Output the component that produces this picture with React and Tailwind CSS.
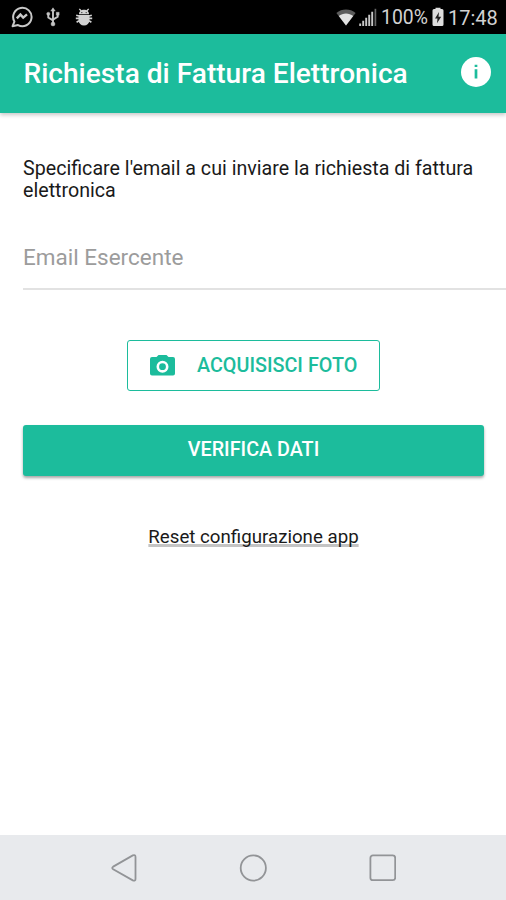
const MessengerIcon = () => (
  <svg width="22" height="22" viewBox="0 0 22 22" fill="none" stroke="#c8c8c8" strokeWidth="2">
    <path d="M3.4 15.6A9.2 9.2 0 1 1 7 19.1L1.6 20.2Z" strokeLinejoin="round" />
    <path d="M5.8 12.4L9.4 8.6L12.2 11.6L16 8.4" strokeWidth="2.4" />
  </svg>
);

const UsbIcon = () => (
  <svg width="14" height="20" viewBox="0 0 14 20" fill="#c4c4c4" stroke="#c4c4c4">
    <path d="M7 3V16M2.3 7V10.5L7 13.4M11.7 7V9.7L7 12.6" fill="none" strokeWidth="1.9" />
    <path d="M7 .8L9.2 4H4.8Z" strokeWidth=".5" />
    <circle cx="7" cy="17" r="2" strokeWidth=".4" />
    <circle cx="2.3" cy="6.8" r="1.6" strokeWidth=".4" />
    <path d="M10.2 5.2H13.2V8.2H10.2Z" strokeWidth=".3" />
  </svg>
);

const BugIcon = () => (
  <svg width="18" height="18" viewBox="0 0 18 18" fill="#d2d2d2">
    <path d="M4 6.2C4 4.8 4.5 3.8 5.3 3L3.8 1.3L4.8.5L6.6 2.2C8.1 1.6 9.9 1.6 11.4 2.2L13.2.5L14.2 1.3L12.7 3C13.5 3.8 14 4.8 14 6.2Z" />
    <path d="M3.5 7H14.5V12.3A5.5 5.2 0 0 1 3.5 12.3Z" />
    <path d="M1.2 7.2L4 8M16.8 7.2L14 8M.8 10.4H17.2M1.6 14.2L4 12.8M16.4 14.2L14 12.8" stroke="#d2d2d2" strokeWidth="1.6" />
    <circle cx="6.8" cy="4.6" r=".7" fill="#333" />
    <circle cx="11.2" cy="4.6" r=".7" fill="#333" />
  </svg>
);

const WifiIcon = () => (
  <svg width="20" height="17" viewBox="0 0 20 17">
    <path d="M10 16.5L.4 4C5.8-.6 14.2-.6 19.6 4Z" fill="#5c5c5c" />
    <path d="M10 16.5L2.8 7C6.8 3.6 13.2 3.6 17.2 7Z" fill="#e2e2e2" />
  </svg>
);

const SignalIcon = () => (
  <svg width="18" height="18" viewBox="0 0 18 18">
    <path d="M1.2 15.6V18M4.2 12.8V18M7.2 9.8V18M10.2 6.8V18M13.2 3.8V18" stroke="#c9c9c9" strokeWidth="1.9" />
    <path d="M16.4 .8V18" stroke="#666" strokeWidth="1.7" />
  </svg>
);

const BatteryIcon = () => (
  <svg width="12" height="20" viewBox="0 0 12 20">
    <path d="M3.5 2V.8H8.5V2H10A1.5 1.5 0 0 1 11.5 3.5V17.5A1.5 1.5 0 0 1 10 19H2A1.5 1.5 0 0 1 .5 17.5V3.5A1.5 1.5 0 0 1 2 2Z" fill="#dedede" />
    <path d="M7 5L3 11.4H5.5L5 16.2L9.2 9.8H6.5Z" fill="#222" />
  </svg>
);

const InfoIcon = () => (
  <svg width="30" height="30" viewBox="0 0 30 30">
    <circle cx="15" cy="15" r="15" fill="#fff" />
    <path d="M15 7.7V10.1M15 12.3V21.6" stroke="#1cbc9c" strokeWidth="2.7" />
  </svg>
);

const CameraIcon = () => (
  <svg width="25" height="21" viewBox="0 0 25 21">
    <path
      d="M8.5 0H16.5L18.5 2H23A2 2 0 0 1 25 4V18.6A2 2 0 0 1 23 20.6H2A2 2 0 0 1 0 18.6V4A2 2 0 0 1 2 2H6.5Z"
      fill="#1cbc9c"
    />
    <circle cx="12.5" cy="11.7" r="4.7" fill="none" stroke="#fff" strokeWidth="2.6" />
  </svg>
);

const StatusBar = () => (
  <div className="flex h-[34px] items-center bg-black pl-[11px] pr-2 text-[#d2d2d2]">
    <MessengerIcon />
    <div className="ml-[13px]"><UsbIcon /></div>
    <div className="ml-[15px]"><BugIcon /></div>
    <div className="ml-auto"><WifiIcon /></div>
    <div className="ml-[3px]"><SignalIcon /></div>
    <span className="ml-1 w-[45px] whitespace-nowrap pt-[2px] text-[19.4px] leading-none">100%</span>
    <div className="ml-[6px]"><BatteryIcon /></div>
    <span className="ml-1 w-[50px] whitespace-nowrap pt-px text-[20px] leading-none">17:48</span>
  </div>
);

const Header = () => (
  <header className="flex h-[79px] items-center justify-between bg-[#1cbc9c] pl-[23.5px] pr-[15px] shadow-[0_2px_4px_rgba(0,0,0,0.22)]">
    <h1 className="whitespace-nowrap text-[28.1px] font-medium leading-8 text-white">
      Richiesta di Fattura Elettronica
    </h1>
    <button type="button" className="mb-[3px]">
      <InfoIcon />
    </button>
  </header>
);

const NavBar = () => (
  <nav className="flex h-[65px] items-center justify-center bg-[#e8eaed]">
    <svg width="286" height="28" viewBox="0 0 286 28" fill="none" stroke="#929497" strokeWidth="1.8">
      <path d="M3.2 12.6L22.8 1.4Q25.5.4 25.5 3V25Q25.5 27.4 22.8 26.4L3.2 15.3Q1.3 14 3.2 12.6Z" />
      <circle cx="143.3" cy="14" r="12.6" />
      <rect x="260.4" y="1.4" width="24.8" height="24.8" rx="2.5" />
    </svg>
  </nav>
);

const App = () => {
  return (
    <div className="flex h-[900px] w-[506px] flex-col overflow-hidden bg-white font-['Roboto',sans-serif]">
      <StatusBar />
      <Header />

      <main className="flex flex-1 flex-col pl-[23px] pt-[45px]">
        <p className="whitespace-nowrap text-[19.67px] leading-[22px] text-[#1a1a1a]">
          Specificare l'email a cui inviare la richiesta di fattura
          <br />
          elettronica
        </p>

        <input
          type="email"
          placeholder="Email Esercente"
          className="mt-6 h-[64px] w-full border-b-2 border-[#e2e2e2] text-[22.5px] outline-none placeholder:text-[#9c9c9c]"
        />

        <div className="mr-[22px] mt-[50px] flex flex-col items-center">
          <button
            type="button"
            className="flex h-[51px] w-[253px] items-center rounded-[3px] border-[1.5px] border-[#1cbc9c] pl-[22px] text-[19.75px] font-medium text-[#1cbc9c]"
          >
            <CameraIcon />
            <span className="ml-[22px] whitespace-nowrap">ACQUISISCI FOTO</span>
          </button>

          <button
            type="button"
            className="mt-[34px] h-[51px] w-full rounded-[3px] bg-[#1cbc9c] pb-px text-[19.75px] font-medium text-white shadow-[0_2px_3px_rgba(0,0,0,0.35)]"
          >
            VERIFICA DATI
          </button>

          <a className="mt-[49px] whitespace-nowrap text-[18.7px] leading-6 text-[#1a1a1a] underline decoration-[#c4c4c4] decoration-[3px] underline-offset-1 [text-decoration-skip-ink:none]">
            Reset configurazione app
          </a>
        </div>
      </main>

      <NavBar />
    </div>
  );
};

export default App;
